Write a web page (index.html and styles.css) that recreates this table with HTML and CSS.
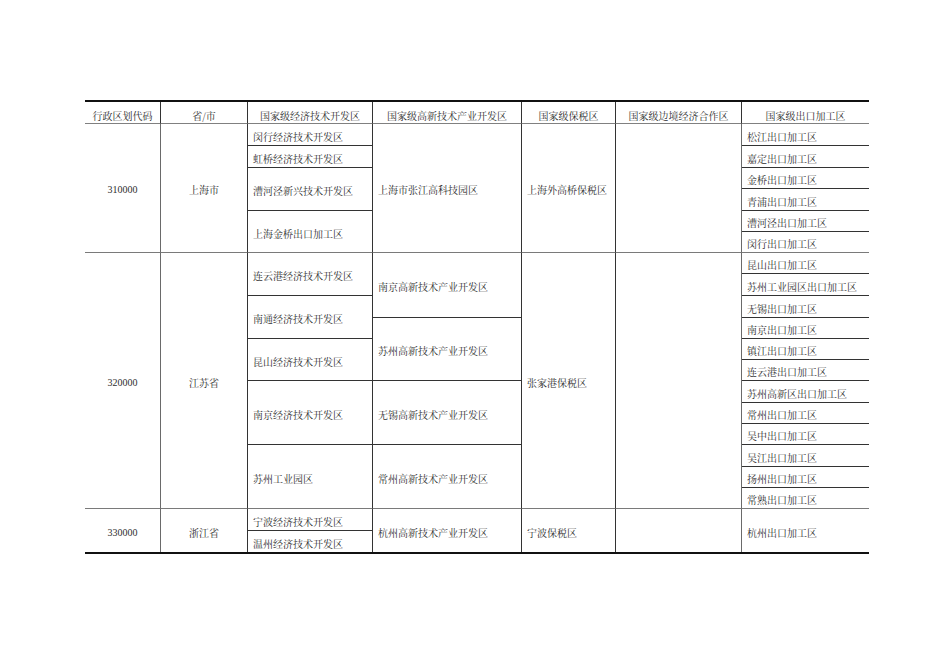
FILE: index.html
```html
<!DOCTYPE html>
<html lang="zh-CN">
<head>
<meta charset="utf-8">
<title>国家级开发区</title>
<link rel="stylesheet" href="styles.css">
</head>
<body>
<div class="tbl">
  <div class="h">行政区划代码</div>
  <div class="h">省/市</div>
  <div class="h">国家级经济技术开发区</div>
  <div class="h">国家级高新技术产业开发区</div>
  <div class="h">国家级保税区</div>
  <div class="h">国家级边境经济合作区</div>
  <div class="h e">国家级出口加工区</div>

  <div class="c ctr num r6 g gl">310000</div>
  <div class="c ctr r6 g">上海市</div>
  <div class="c">闵行经济技术开发区</div>
  <div class="c r6 g">上海市张江高科技园区</div>
  <div class="c r6 g">上海外高桥保税区</div>
  <div class="c r6 g gl"></div>
  <div class="c e">松江出口加工区</div>

  <div class="c">虹桥经济技术开发区</div>
  <div class="c e">嘉定出口加工区</div>

  <div class="c r2">漕河泾新兴技术开发区</div>
  <div class="c e">金桥出口加工区</div>

  <div class="c e">青浦出口加工区</div>

  <div class="c r2 g">上海金桥出口加工区</div>
  <div class="c e">漕河泾出口加工区</div>

  <div class="c e g">闵行出口加工区</div>

  <div class="c ctr num r12 g gl">320000</div>
  <div class="c ctr r12 g">江苏省</div>
  <div class="c r2">连云港经济技术开发区</div>
  <div class="c r3">南京高新技术产业开发区</div>
  <div class="c r12 g">张家港保税区</div>
  <div class="c r12 g gl"></div>
  <div class="c e">昆山出口加工区</div>

  <div class="c e">苏州工业园区出口加工区</div>

  <div class="c r2">南通经济技术开发区</div>
  <div class="c e">无锡出口加工区</div>

  <div class="c r3">苏州高新技术产业开发区</div>
  <div class="c e">南京出口加工区</div>

  <div class="c r2">昆山经济技术开发区</div>
  <div class="c e">镇江出口加工区</div>

  <div class="c e">连云港出口加工区</div>

  <div class="c r3">南京经济技术开发区</div>
  <div class="c r3">无锡高新技术产业开发区</div>
  <div class="c e">苏州高新区出口加工区</div>

  <div class="c e">常州出口加工区</div>

  <div class="c e">吴中出口加工区</div>

  <div class="c r3 g">苏州工业园区</div>
  <div class="c r3 g">常州高新技术产业开发区</div>
  <div class="c e">吴江出口加工区</div>

  <div class="c e">扬州出口加工区</div>

  <div class="c e g">常熟出口加工区</div>

  <div class="c ctr num r2 z gl">330000</div>
  <div class="c ctr r2 z">浙江省</div>
  <div class="c">宁波经济技术开发区</div>
  <div class="c r2 z">杭州高新技术产业开发区</div>
  <div class="c r2 z">宁波保税区</div>
  <div class="c r2 z gl"></div>
  <div class="c e r2 z">杭州出口加工区</div>

  <div class="c z">温州经济技术开发区</div>
</div>
</body>
</html>
```

FILE: styles.css
```css
* {
  box-sizing: border-box;
}

html, body {
  margin: 0;
  padding: 0;
  background: #ffffff;
}

body {
  font-family: "Noto Serif CJK SC", "Liberation Serif", "Noto Sans CJK SC", serif;
  font-size: 10px;
  color: #2e2e2e;
}

.tbl {
  display: grid;
  grid-template-columns: 76px 87px 125px 149px 94px 126px 127px;
  grid-template-rows: 22px 22px 22px 21px 22px 21px 21px 21px 22px 22px 21px 21px 21px 22px 21px 21px 22px 21px 21px 22px 21px;
  width: 784px;
  margin: 100px 0 0 85px;
  border-top: 2px solid #111111;
  border-bottom: 2px solid #111111;
}

.h,
.c {
  display: flex;
  align-items: center;
  border-right: 1px solid #333333;
  border-bottom: 1px solid #333333;
  line-height: 12px;
  white-space: nowrap;
}

.h {
  justify-content: center;
  align-items: flex-end;
  padding-bottom: 1px;
  border-bottom-color: #808080;
}

.c {
  padding: 4px 0 0 5px;
}

.ctr {
  justify-content: center;
  padding-left: 0;
}

.num {
  font-family: "Liberation Serif", serif;
}

.e {
  border-right: none;
}

.gl {
  border-right-color: #6a6a6a;
}

.g {
  border-bottom-color: #7a7a7a;
}

.z {
  border-bottom: none;
}

.r2 {
  grid-row: span 2;
}

.r3 {
  grid-row: span 3;
}

.r6 {
  grid-row: span 6;
}

.r12 {
  grid-row: span 12;
}
```
